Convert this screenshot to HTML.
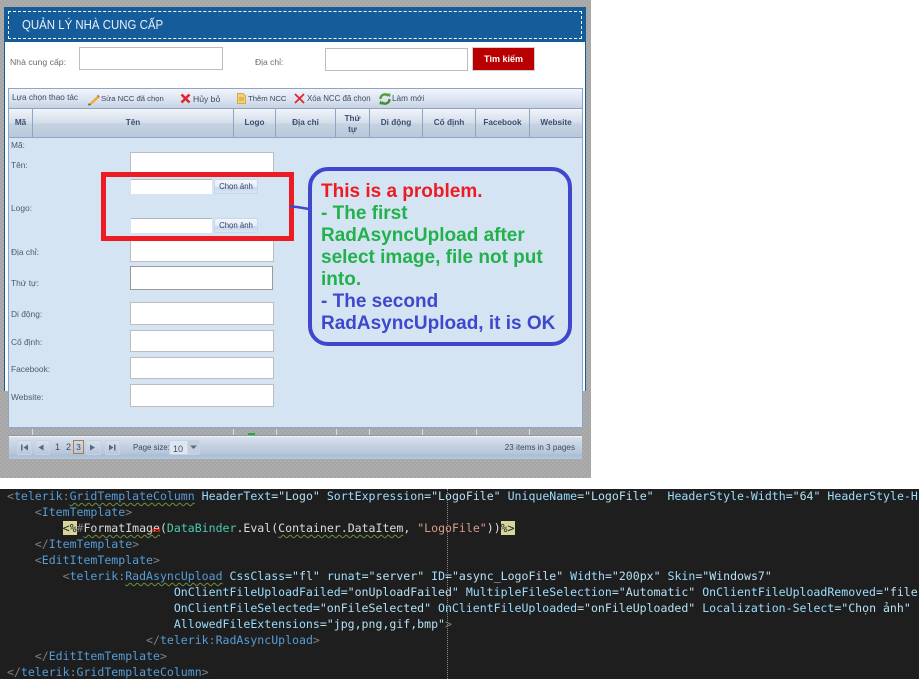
<!DOCTYPE html>
<html><head><meta charset="utf-8"><style>
html,body{margin:0;padding:0;background:#fff}
#r{position:relative;width:924px;height:685px;overflow:hidden;background:#fff;font-family:"Liberation Sans","Noto Sans CJK SC",sans-serif}
#r div,#r svg,#r span.a{position:absolute}
#shot{left:0;top:0;width:591px;height:478px;background:#a9a9a9 repeating-conic-gradient(#a5a5a5 0 25%,#adadad 0 50%) 0 0/4px 4px}
.t{font-size:8.6px;color:#3c4a62;white-space:nowrap;line-height:12px;filter:blur(.3px)}
.l{font-size:8.4px;color:#4d5a72;white-space:nowrap;line-height:12px;filter:blur(.3px)}
.h{font-size:8.2px;font-weight:bold;color:#3a4e72;text-align:center;filter:blur(.3px);line-height:10px}
.i{background:#fff;border:1px solid #bdbdbd;box-sizing:border-box}
.sep{width:1px;top:108px;height:29px;background:#8fa5c3}
.tick{width:1px;top:429px;height:6px;background:#d6dfea}
.pb{top:440px;width:15px;height:15px;box-sizing:border-box;border:1px solid #c8d3e2;background:linear-gradient(#d8e0ec,#b8c6d9);border-radius:2px}
.cb{font-size:7.8px;color:#2f4468;text-align:center;line-height:14px;box-sizing:border-box;border:1px solid #c9d7ea;background:linear-gradient(#f4f7fb 0,#e3ebf6 55%,#c8d7ec 56%,#dbe5f3 100%);width:44px;height:15px;left:214px;filter:blur(.25px);border-radius:2px}
#code{left:0;top:489px;width:919px;height:190px;background:#1e1e1e;overflow:hidden}
#code pre{position:absolute;margin:-1px 0 0;left:7px;font-family:"DejaVu Sans Mono","Liberation Mono",monospace;font-size:11.56px;line-height:16px;white-space:pre;color:#9cdcfe}
.g{color:#808080}.n{color:#569cd6}.v{color:#b5e0f5}.w{color:#dcdcdc}.c{color:#4ec9b0}.o{color:#d69d85}
.u{text-decoration:underline wavy #6f8f3a 1px;text-underline-offset:2px}
.y{background:#d6d69a;color:#1e1e1e}
</style></head><body><div id="r">
<div id="shot"></div>

<div style="left:4px;top:7px;width:582px;height:384px;background:#fff;border-left:1px solid #155c9b;border-right:1px solid #155c9b;box-sizing:border-box"></div>
<div style="left:4px;top:7px;width:582px;height:35px;background:#155c9b"></div>
<div style="left:8px;top:11px;width:574px;height:28px;box-sizing:border-box;border:1px dashed #fff"></div>
<div style="left:22px;top:16px;font-size:13px;line-height:17px;color:#e9f0f7;white-space:nowrap;filter:blur(.2px);transform:scaleX(.88);transform-origin:0 0">QUẢN LÝ NHÀ CUNG CẤP</div>

<div class="l" style="left:10px;top:56px;font-size:8.7px;color:#6b6b6b">Nhà cung cấp:</div>
<div class="i" style="left:79px;top:47px;width:144px;height:23px"></div>
<div class="l" style="left:255px;top:56px;font-size:8.5px;color:#6b6b6b">Địa chỉ:</div>
<div class="i" style="left:325px;top:48px;width:143px;height:23px"></div>
<div style="left:472px;top:47px;width:63px;height:24px;background:#b80000;border:1px solid #cfcfcf;box-sizing:border-box;color:#fff;font-size:9px;font-weight:bold;text-align:center;line-height:22px">Tìm kiếm</div>

<!-- toolbar -->
<div style="left:8px;top:88px;width:575px;height:20px;box-sizing:border-box;border:1px solid #8fa5c3;border-bottom:0;background:linear-gradient(#f2f5fa,#d9e2ef 60%,#c6d3e4)"></div>
<div class="t" style="left:12px;top:92px;font-size:8.2px">Lựa chọn thao tác</div>
<svg style="left:87px;top:93px" width="13" height="13" viewBox="0 0 13 13"><path d="M2 11 L10 3 L12 5 L4 12 Z" fill="#e8b038"/><path d="M1 12.5 L2 10 L4 12 Z" fill="#6a5030"/><path d="M10 3 L11 1.5 L12.8 3.5 L12 5 Z" fill="#d86a50"/></svg>
<div class="t" style="left:101px;top:93px;font-size:7.7px">Sửa NCC đã chọn</div>
<svg style="left:180px;top:93px" width="11" height="11" viewBox="0 0 11 11"><path d="M1.5 1.5 L9.5 9.5 M9.5 1.5 L1.5 9.5" stroke="#e0262c" stroke-width="2.6"/></svg>
<div class="t" style="left:193px;top:93px">Hủy bỏ</div>
<svg style="left:237px;top:93px" width="9" height="11" viewBox="0 0 9 11"><path d="M.5 .5 H6 L8.5 3 V10.5 H.5 Z" fill="#f2d27a" stroke="#d9a93f"/><path d="M2 5 H7 M2 7 H7" stroke="#c99a30"/></svg>
<div class="t" style="left:248px;top:93px;font-size:7.7px">Thêm NCC</div>
<svg style="left:294px;top:93px" width="11" height="11" viewBox="0 0 11 11"><path d="M1 1 L10 10 M10 1 L1 10" stroke="#e3262c" stroke-width="1.8"/></svg>
<div class="t" style="left:307px;top:93px;font-size:7.9px">Xóa NCC đã chọn</div>
<svg style="left:379px;top:93px" width="12" height="12" viewBox="0 0 12 12"><path d="M1.5 6 A4.5 4.5 0 0 1 9.5 3" fill="none" stroke="#4f9e35" stroke-width="2.4"/><path d="M10.5 6 A4.5 4.5 0 0 1 2.5 9" fill="none" stroke="#3f8f2e" stroke-width="2.4"/><path d="M8 .5 L11.5 .8 L11 4.5 Z" fill="#4f9e35"/><path d="M4 11.5 L.5 11.2 L1 7.5 Z" fill="#3f8f2e"/></svg>
<div class="t" style="left:392px;top:93px;font-size:8.2px">Làm mới</div>

<!-- header -->
<div style="left:8px;top:108px;width:575px;height:30px;box-sizing:border-box;border:1px solid #8fa5c3;background:linear-gradient(#f1f4f9 0,#d3deeb 50%,#c6d3e3 52%,#b9c8da 100%)"></div>
<div class="sep" style="left:32px"></div><div class="sep" style="left:233px"></div><div class="sep" style="left:275px"></div><div class="sep" style="left:335px"></div><div class="sep" style="left:369px"></div><div class="sep" style="left:422px"></div><div class="sep" style="left:475px"></div><div class="sep" style="left:529px"></div>
<div class="h" style="left:9px;top:118px;width:23px">Mã</div>
<div class="h" style="left:33px;top:118px;width:200px">Tên</div>
<div class="h" style="left:234px;top:118px;width:41px">Logo</div>
<div class="h" style="left:276px;top:118px;width:59px">Địa chỉ</div>
<div class="h" style="left:336px;top:113px;width:33px;line-height:11px">Thứ<br>tự</div>
<div class="h" style="left:370px;top:118px;width:52px">Di động</div>
<div class="h" style="left:423px;top:118px;width:52px">Cố định</div>
<div class="h" style="left:476px;top:118px;width:53px">Facebook</div>
<div class="h" style="left:530px;top:118px;width:52px">Website</div>

<!-- body -->
<div style="left:8px;top:138px;width:575px;height:289px;background:#d5e4f3;border-left:1px solid #8fa5c3;border-right:1px solid #8fa5c3;box-sizing:border-box"></div>
<div class="l" style="left:11px;top:139px">Mã:</div>
<div class="l" style="left:11px;top:159px">Tên:</div>
<div class="l" style="left:11px;top:202px">Logo:</div>
<div class="l" style="left:11px;top:246px">Địa chỉ:</div>
<div class="l" style="left:11px;top:277px">Thứ tự:</div>
<div class="l" style="left:11px;top:308px">Di động:</div>
<div class="l" style="left:11px;top:336px">Cố định:</div>
<div class="l" style="left:11px;top:363px">Facebook:</div>
<div class="l" style="left:11px;top:391px">Website:</div>
<div class="i" style="left:130px;top:152px;width:144px;height:24px"></div>
<div class="i" style="left:130px;top:238px;width:144px;height:24px"></div>
<div class="i" style="left:130px;top:266px;width:143px;height:24px;border-color:#9a9a9a"></div>
<div class="i" style="left:130px;top:302px;width:144px;height:23px"></div>
<div class="i" style="left:130px;top:330px;width:144px;height:22px"></div>
<div class="i" style="left:130px;top:357px;width:144px;height:22px"></div>
<div class="i" style="left:130px;top:384px;width:144px;height:23px"></div>

<!-- red box -->
<div style="left:101px;top:172px;width:193px;height:69px;box-sizing:border-box;border:5px solid #ed1c24;background:#d5e4f3"></div>
<div style="left:131px;top:179px;width:81px;height:15px;background:#fff;border-top:1px solid #b5b5b5;box-sizing:border-box"></div>
<div class="cb" style="top:179px">Chọn ảnh</div>
<div style="left:131px;top:218px;width:81px;height:15px;background:#fff;border-top:1px solid #b5b5b5;box-sizing:border-box"></div>
<div class="cb" style="top:218px">Chọn ảnh</div>

<!-- callout -->
<svg style="left:289px;top:202px" width="22" height="10" viewBox="0 0 22 10"><path d="M1 4.5 L8 5 L20 7" fill="none" stroke="#3f48cc" stroke-width="2.5"/></svg>
<div style="left:308px;top:167px;width:264px;height:179px;box-sizing:border-box;border:4px solid #3f48cc;border-radius:20px;background:#d5e4f3"></div>
<div style="left:321px;top:181px;width:245px;font-size:19px;font-weight:bold;line-height:22px;color:#22b14c;white-space:nowrap"><span style="color:#ed1c24">This is a problem.</span><br>- The first<br>RadAsyncUpload after<br>select image, file not put<br>into.<br><span style="color:#3f48cc">- The second<br>RadAsyncUpload, it is OK</span></div>

<!-- strip + pager -->
<div style="left:9px;top:427px;width:573px;height:2px;background:#93a8c4"></div>
<div class="tick" style="left:32px"></div><div class="tick" style="left:233px"></div><div class="tick" style="left:276px"></div><div class="tick" style="left:336px"></div><div class="tick" style="left:369px"></div><div class="tick" style="left:422px"></div><div class="tick" style="left:476px"></div><div class="tick" style="left:529px"></div>
<div style="left:248px;top:433px;width:7px;height:2px;background:#1fae2e"></div>
<div style="left:9px;top:435px;width:573px;height:1px;background:#8a9aae"></div>
<div style="left:9px;top:436px;width:573px;height:23px;background:linear-gradient(#f6f9fc 0,#d5dfec 8%,#b5c4d8 78%,#a8bdd6 80%,#b5c8de 100%)"></div>
<div class="pb" style="left:17px"></div><div class="pb" style="left:35px"></div><div class="pb" style="left:86px"></div><div class="pb" style="left:105px"></div>
<svg style="left:17px;top:440px" width="104" height="15" viewBox="0 0 104 15" fill="#53688c"><path d="M4 4.5h1.5v6H4zM11 4.5v6L6.5 7.5z"/><path d="M26.5 4.5v6L21.5 7.5z"/><path d="M73 4.5v6L78 7.5z"/><path d="M92 4.5v6L96.5 7.5zM97 4.5h1.5v6H97z"/></svg>
<div class="t" style="left:55px;top:441px;font-size:9px">1</div>
<div class="t" style="left:66px;top:441px;font-size:9px">2</div>
<div style="left:73px;top:440px;width:11px;height:14px;box-sizing:border-box;border:1px solid #b87a45;font-size:8.5px;color:#3c4a62;text-align:center;line-height:13px">3</div>
<div class="t" style="left:133px;top:442px;font-size:7.9px">Page size:</div>
<div style="left:169px;top:440px;width:31px;height:15px;box-sizing:border-box;border:1px solid #c8d3e2;background:linear-gradient(90deg,#dfe6f0 0,#dfe6f0 60%,#c3cfdf 60%);border-radius:2px"></div>
<div class="t" style="left:173px;top:443px;font-size:9px">10</div>
<svg style="left:190px;top:445px" width="8" height="5" viewBox="0 0 8 5"><path d="M0 .5H7L3.5 4z" fill="#53688c"/></svg>
<div class="t" style="right:349px;top:442px;font-size:8.1px">23 items in 3 pages</div>

<!-- code -->
<div id="code">
<pre style="top:0"><span class="g">&lt;</span><span class="n">telerik</span><span class="g">:</span><span class="n u">GridTemplateColumn</span> HeaderText<span class="v">="Logo"</span> SortExpression<span class="v">="LogoFile"</span> UniqueName<span class="v">="LogoFile"</span>  HeaderStyle-Width<span class="v">="64"</span> HeaderStyle-H</pre>
<pre style="top:16px">    <span class="g">&lt;</span><span class="n">ItemTemplate</span><span class="g">&gt;</span></pre>
<pre style="top:32px;color:#dcdcdc">        <span class="y">&lt;%</span><span class="g">#</span><span class="u">FormatImage</span>(<span class="c">DataBinder</span>.Eval(<span class="u">Container.DataItem</span>, <span class="o">"LogoFile"</span>))<span class="y">%&gt;</span></pre>
<pre style="top:48px">    <span class="g">&lt;/</span><span class="n">ItemTemplate</span><span class="g">&gt;</span></pre>
<pre style="top:64px">    <span class="g">&lt;</span><span class="n">EditItemTemplate</span><span class="g">&gt;</span></pre>
<pre style="top:80px">        <span class="g">&lt;</span><span class="n">telerik</span><span class="g">:</span><span class="n u">RadAsyncUpload</span> CssClass<span class="v">="fl"</span> runat<span class="v">="server"</span> ID<span class="v">="async_LogoFile"</span> Width<span class="v">="200px"</span> Skin<span class="v">="Windows7"</span></pre>
<pre style="top:96px">                        OnClientFileUploadFailed<span class="v">="onUploadFailed"</span> MultipleFileSelection<span class="v">="Automatic"</span> OnClientFileUploadRemoved<span class="v">="file</span></pre>
<pre style="top:112px">                        OnClientFileSelected<span class="v">="onFileSelected"</span> OnClientFileUploaded<span class="v">="onFileUploaded"</span> Localization-Select<span class="v">="Chọn ảnh"</span></pre>
<pre style="top:128px">                        AllowedFileExtensions<span class="v">="jpg,png,gif,bmp"</span><span class="g">&gt;</span></pre>
<pre style="top:144px">                    <span class="g">&lt;/</span><span class="n">telerik</span><span class="g">:</span><span class="n">RadAsyncUpload</span><span class="g">&gt;</span></pre>
<pre style="top:160px">    <span class="g">&lt;/</span><span class="n">EditItemTemplate</span><span class="g">&gt;</span></pre>
<pre style="top:176px"><span class="g">&lt;/</span><span class="n">telerik</span><span class="g">:</span><span class="n">GridTemplateColumn</span><span class="g">&gt;</span></pre>
<div style="left:447px;top:0;width:0;height:190px;border-left:1px dotted #8a8a8a"></div>
<div style="left:152px;top:40px;width:8px;height:3px;border:1px solid #e51400;box-sizing:border-box"></div>
</div>
</div></body></html>
